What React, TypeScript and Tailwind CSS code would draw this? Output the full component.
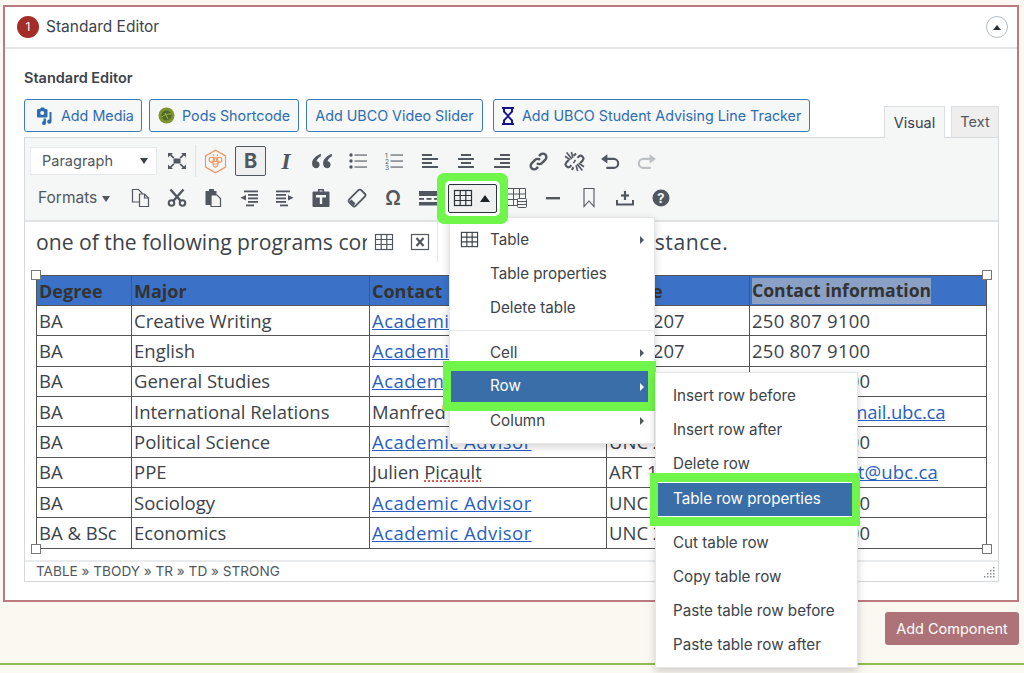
import type { ReactNode } from 'react';

const ink = '#50575e';

const Svg = ({ children, size = 20 }: { children: ReactNode; size?: number }) => (
  <svg width={size} height={size} viewBox="0 0 20 20" fill={ink}>
    {children}
  </svg>
);

const TableGlyph = ({ size = 20, color = '#3c434a' }: { size?: number; color?: string }) => (
  <svg width={size} height={size} viewBox="0 0 20 20" fill="none" stroke={color} strokeWidth="1.2">
    <rect x="1.5" y="2.5" width="17" height="15" />
    <path d="M1.5 7.5h17M1.5 12.5h17M7.2 2.5v15M12.8 2.5v15" />
  </svg>
);

const Lines = ({ rows }: { rows: [number, number, number][] }) => (
  <Svg>
    {rows.map(([x, y, w], i) => (
      <rect key={i} x={x} y={y} width={w} height="2" />
    ))}
  </Svg>
);

const icons: Record<string, ReactNode> = {
  fullscreen: (
    <Svg>
      <rect x="6.5" y="7.5" width="7" height="5" />
      <path d="M1 2h5L4.4 3.6 7.5 6.5 6 7.5 3 4.6 1 6.5zM19 2h-5l1.6 1.6-3.1 2.9 1.5 1 3-2.9 2 1.9zM1 18h5l-1.6-1.6 3.1-2.9-1.5-1-3 2.9-2-1.9zM19 18h-5l1.6-1.6-3.1-2.9 1.5-1 3 2.9 2-1.9z" />
    </Svg>
  ),
  bee: (
    <svg width="23" height="25" viewBox="0 0 23 25" fill="none" stroke="#f0935a" strokeWidth="1.1">
      <path d="M11.5 1.2 21.5 6.9v11.2l-10 5.7-10-5.7V6.9z" />
      <circle cx="7.7" cy="10.8" r="2.6" />
      <circle cx="15.3" cy="10.8" r="2.6" />
      <ellipse cx="11.5" cy="13.5" rx="2.6" ry="4.6" />
      <path d="M9.2 12.5h4.6M9.2 15h4.6M10 7l-1-1.6M13 7l1-1.6" />
    </svg>
  ),
  quote: (
    <svg width="22" height="22" viewBox="0 0 20 20" fill={ink}>
      <path d="M9 3.5C4.5 5.2 1 8.2 1 12.5 1 15 2.5 16.5 4.5 16.5c1.9 0 3.3-1.4 3.3-3.2 0-1.8-1.2-3-2.8-3.1.4-1.9 2-3.4 4-4.6zM19 3.5c-4.5 1.7-8 4.7-8 9 0 2.5 1.5 4 3.5 4 1.9 0 3.3-1.4 3.3-3.2 0-1.8-1.2-3-2.8-3.1.4-1.9 2-3.4 4-4.6z" />
    </svg>
  ),
  bullets: (
    <Svg>
      <circle cx="3" cy="4" r="1.7" />
      <circle cx="3" cy="10" r="1.7" />
      <circle cx="3" cy="16" r="1.7" />
      <rect x="6.5" y="3.5" width="12.5" height="1.1" />
      <rect x="6.5" y="9.5" width="12.5" height="1.1" />
      <rect x="6.5" y="15.5" width="12.5" height="1.1" />
    </Svg>
  ),
  numbers: (
    <Svg>
      <text x="1" y="6.5" fontSize="6.5" fontFamily="Inter, sans-serif">1</text>
      <text x="1" y="12.5" fontSize="6.5" fontFamily="Inter, sans-serif">2</text>
      <text x="1" y="18.5" fontSize="6.5" fontFamily="Inter, sans-serif">3</text>
      <rect x="6.5" y="3.5" width="12.5" height="1.1" />
      <rect x="6.5" y="9.5" width="12.5" height="1.1" />
      <rect x="6.5" y="15.5" width="12.5" height="1.1" />
    </Svg>
  ),
  left: <Lines rows={[[2, 3, 10], [2, 7, 16], [2, 11, 10], [2, 15, 16]]} />,
  center: <Lines rows={[[5, 3, 10], [2, 7, 16], [5, 11, 10], [2, 15, 16]]} />,
  right: <Lines rows={[[8, 3, 10], [2, 7, 16], [8, 11, 10], [2, 15, 16]]} />,
  link: (
    <svg width="21" height="21" viewBox="0 0 20 20" fill="none" stroke={ink} strokeWidth="2.3">
      <path d="M8.5 11.5a3.3 3.3 0 0 0 4.7 0l3.3-3.3a3.3 3.3 0 0 0-4.7-4.7L10.5 4.8" />
      <path d="M11.5 8.5a3.3 3.3 0 0 0-4.7 0l-3.3 3.3a3.3 3.3 0 0 0 4.7 4.7l1.3-1.3" />
    </svg>
  ),
  unlink: (
    <svg width="21" height="21" viewBox="0 0 20 20" fill="none" stroke={ink} strokeWidth="2">
      <path d="M13 6.5l1-1.3a2.7 2.7 0 0 1 3.8 3.8L15.5 11.5" />
      <path d="M7 13.5l-1 1.3a2.7 2.7 0 0 1-3.8-3.8l2.3-2.5" />
      <path strokeWidth="1.5" d="M2.5 1.5l5 6M1 5l5 3.5M7 1l1.5 5.5M17.5 18.5l-5-6M19 15l-5-3.5M13 19l-1.5-5.5M11 8.5l-2 3" />
      <path d="M9 4.5l2.5-2M9 15.5l-1.5 2.5" />
    </svg>
  ),
  undo: (
    <svg width="21" height="21" viewBox="0 0 20 20" fill="none" stroke={ink} strokeWidth="2">
      <path d="M5.5 7.5h7.5a4.3 4.3 0 0 1 0 8.6H6" />
      <path fill={ink} stroke="none" d="M1 7.5 7 3v9z" />
    </svg>
  ),
  redo: (
    <svg width="21" height="21" viewBox="0 0 20 20" fill="none" stroke="#bcc0c4" strokeWidth="2">
      <path d="M14.5 7.5H7a4.3 4.3 0 0 0 0 8.6h7" />
      <path fill="#bcc0c4" stroke="none" d="M19 7.5 13 3v9z" />
    </svg>
  ),
  copy: (
    <svg width="20" height="20" viewBox="0 0 20 20" fill="#f5f6f6" stroke={ink} strokeWidth="1.2">
      <path d="M1.5 1.5h6l3.5 3.5v9h-9.5z" />
      <path d="M8.5 6h5l4 4v8.5h-9z" />
      <path d="M13.5 6v4h4" fill="none" />
    </svg>
  ),
  cut: (
    <svg width="20" height="20" viewBox="0 0 20 20" fill="none" stroke={ink} strokeWidth="2">
      <circle cx="4.5" cy="15" r="2.8" />
      <circle cx="15.5" cy="15" r="2.8" />
      <path strokeWidth="2.4" d="M6.5 12.7 16.5 1.5M13.5 12.7 3.5 1.5" />
    </svg>
  ),
  paste: (
    <Svg>
      <path d="M6 1h5v2h2.5v4H9v10H2.5V3H6z" />
      <path fill="#f5f6f6" stroke={ink} strokeWidth="1.2" d="M8 7h6l3.5 3.5v8H8z" />
    </Svg>
  ),
  outdent: (
    <Svg>
      <rect x="5" y="2.5" width="14" height="1.8" />
      <rect x="9" y="6" width="10" height="1.8" />
      <rect x="9" y="9.5" width="10" height="1.8" />
      <rect x="9" y="13" width="10" height="1.8" />
      <rect x="7" y="16.5" width="8" height="1.8" />
      <path d="M7 7v5.5L1.5 9.7z" />
    </Svg>
  ),
  indent: (
    <Svg>
      <rect x="1" y="2.5" width="14" height="1.8" />
      <rect x="1" y="6" width="10" height="1.8" />
      <rect x="1" y="9.5" width="10" height="1.8" />
      <rect x="1" y="13" width="10" height="1.8" />
      <rect x="5" y="16.5" width="8" height="1.8" />
      <path d="M13 7v5.5l5.5-2.8z" />
    </Svg>
  ),
  pasteText: (
    <Svg>
      <path fillRule="evenodd" d="M7 1h6v2.500h4.500q1 0 1 1V18q0 1-1 1h-15q-1 0-1-1V4.500q0-1 1-1H7zM8.500 2.500v1h3v-1zM5 7v2.500h3.800V16h2.400V9.500H15V7z" />
    </Svg>
  ),
  eraser: (
    <svg width="20" height="20" viewBox="0 0 20 20" fill="none" stroke={ink} strokeWidth="1.8">
      <rect x="5.5" y="1.5" width="9" height="17" rx="2" transform="rotate(45 10 10)" />
      <path strokeWidth="2.6" d="M3.5 12.5 7.5 16.5" />
    </svg>
  ),
  hr: (
    <Svg>
      <rect x="0" y="3" width="20" height="5" />
      <rect x="0" y="10" width="5" height="1.8" />
      <rect x="7.5" y="10" width="5" height="1.8" />
      <rect x="15" y="10" width="5" height="1.8" />
      <rect x="0" y="14" width="20" height="3.5" />
    </Svg>
  ),
  split: (
    <svg width="20" height="20" viewBox="0 0 20 20" fill="#f5f6f6" stroke={ink} strokeWidth="1">
      <path fill="none" d="M0.5 0.5h18v17h-18zM0.5 6h18M0.5 11.5h18M6.5 0.5v17M12.5 0.5v17" />
      <rect x="10.5" y="10.5" width="9" height="9" rx="1" />
      <path fill="none" d="M10.5 13.5h9M10.5 16.5h9" />
    </svg>
  ),
  dash: (
    <Svg>
      <rect x="3" y="9" width="14" height="2.4" />
    </Svg>
  ),
  bookmark: (
    <svg width="20" height="20" viewBox="0 0 20 20" fill="none" stroke={ink} strokeWidth="1.1">
      <path d="M5 0.5h10v18l-5-5.5-5 5.5z" />
    </svg>
  ),
  insert: (
    <Svg>
      <rect x="8.9" y="3" width="2.2" height="9" />
      <rect x="6" y="6.4" width="8" height="2.2" />
      <path d="M1 12h2v3.5h14V12h2v5.5H1z" />
    </Svg>
  ),
  help: (
    <svg width="20" height="20" viewBox="0 0 20 20">
      <circle cx="10" cy="10" r="8.5" fill={ink} />
      <text x="10" y="14.5" textAnchor="middle" fontSize="13" fontWeight="700" fill="#f5f6f6" fontFamily="Inter, sans-serif">?</text>
    </svg>
  ),
};

const Cell = ({ children }: { children: ReactNode }) => (
  <div className="w-9 h-7 flex items-center justify-center shrink-0">{children}</div>
);

const Handle = ({ className }: { className: string }) => (
  <div className={`absolute w-[10px] h-[10px] bg-white border border-[#777] z-[5] ${className}`} />
);

const rows = [
  ['BA', 'Creative Writing', 'link', 'UNC 207', '250 807 9100'],
  ['BA', 'English', 'link', 'UNC 207', '250 807 9100'],
  ['BA', 'General Studies', 'link', 'UNC 207', '250 807 9100'],
  ['BA', 'International Relations', 'Manfred Jaeger', 'ART 120', 'manfred.j@mail.ubc.ca'],
  ['BA', 'Political Science', 'link', 'UNC 207', '250 807 9100'],
  ['BA', 'PPE', 'Julien Picault', 'ART 124', 'julien.picault@ubc.ca'],
  ['BA', 'Sociology', 'link', 'UNC 207', '250 807 9100'],
  ['BA & BSc', 'Economics', 'link', 'UNC 207', '250 807 9100'],
];

const MenuItem = ({ label, arrow, icon }: { label: string; arrow?: boolean; icon?: boolean }) => (
  <div className="h-[34px] flex items-center pl-[40px] pr-[10px] relative text-[#3c434a]">
    {icon && (
      <span className="absolute left-[10px] top-[7px]">
        <TableGlyph size={19} />
      </span>
    )}
    <span className="flex-1">{label}</span>
    {arrow && <span className="w-0 h-0 border-y-[4px] border-y-transparent border-l-[4px] border-l-[#50575e]" />}
  </div>
);

const SubItem = ({ label }: { label: string }) => (
  <div className="h-[34.2px] flex items-center pl-[17px] text-[#3c434a]">{label}</div>
);

export default function App() {
  return (
    <div className="relative w-[1024px] h-[673px] overflow-hidden bg-[#fbf8f1] font-['Inter',sans-serif] text-[#3c434a]">
      <div className="pt-[5px] pl-[3px] pr-[5px]">
        <div className="h-[597px] border-2 border-[#ba7a80] bg-white">
          <div className="h-[42px] border-b-2 border-[#e4e6e8] flex items-center pl-3 pr-[9px]">
            <span className="w-[22px] h-[22px] rounded-full bg-[#a42d28] text-white text-[12px] flex items-center justify-center">1</span>
            <span className="ml-[7px] text-[15.5px] flex-1">Standard Editor</span>
            <span className="w-[22px] h-[22px] rounded-full border border-[#b5bcc5] flex items-center justify-center">
              <span className="w-0 h-0 border-x-[4px] border-x-transparent border-b-[5px] border-b-[#2c3338]" />
            </span>
          </div>

          <div className="pl-[19px] pr-[18px]">
            <div className="pt-[19px] h-[50px] text-[14.5px] font-semibold leading-[20px]">Standard Editor</div>

            <div className="flex items-end h-[38px]">
              <div className="flex gap-[7px] text-[14.3px] text-[#2e6cb0] self-start">
                <button className="h-[33px] w-[118px] border border-[#3f7ab5] rounded-[3px] bg-[#f6f7f7] flex items-center pl-[9px] gap-[7px]">
                  <svg width="20" height="20" viewBox="0 0 20 20" fill="#2e6cb0">
                    <path fillRule="evenodd" d="M4 3h2l1-1.5h3L11 3h1.5q1 0 1 1v6.5q0 1-1 1H4q-1 0-1-1V4q0-1 1-1zM8.2 5a2 2 0 1 0 0 4 2 2 0 0 0 0-4z" />
                    <path d="M15 6h2.5v9.5a2.2 2.2 0 1 1-2-2.1V6zM9.5 12.5H12V17a2 2 0 1 1-2.5-1.9z" />
                  </svg>
                  Add Media
                </button>
                <button className="h-[33px] w-[150px] border border-[#3f7ab5] rounded-[3px] bg-[#f6f7f7] flex items-center pl-[8px] gap-[7px]">
                  <svg width="17" height="17" viewBox="0 0 17 17">
                    <circle cx="8.5" cy="8.5" r="8" fill="#7d9431" />
                    <circle cx="8.5" cy="8.5" r="5" fill="#4f6b22" />
                    <path d="M4 10c3-3 6-3 9-3M7 6l3 6" stroke="#a4b95c" fill="none" />
                  </svg>
                  Pods Shortcode
                </button>
                <button className="h-[33px] w-[177px] border border-[#3f7ab5] rounded-[3px] bg-[#f6f7f7] flex items-center justify-center">
                  Add UBCO Video Slider
                </button>
                <button className="ml-[3px] h-[33px] w-[317px] border border-[#3f7ab5] rounded-[3px] bg-[#f6f7f7] flex items-center pl-[7px] gap-[7px]">
                  <svg width="14" height="18" viewBox="0 0 14 18" fill="#14128c">
                    <path d="M1 0h12v2h-1v3L8 9l4 4v3h1v2H1v-2h1v-3l4-4-4-4V2H1zM4 2v2.3L7 7.5l3-3.2V2zM7 10.5 4 13.7V16h6v-2.300z" />
                  </svg>
                  Add UBCO Student Advising Line Tracker
                </button>
              </div>
              <div className="ml-auto flex items-end text-[14.5px] gap-[6px]">
                <div className="h-[32px] w-[61px] border border-[#dcdfe2] border-b-0 bg-[#f5f6f6] flex items-center justify-center relative top-px">Visual</div>
                <div className="h-[31px] w-[48px] border border-[#dcdfe2] border-b-0 bg-[#eeeeee] flex items-center justify-center text-[#50575e]">Text</div>
              </div>
            </div>

            <div className="border border-[#d6d9dc]">
              <div className="h-[84px] bg-[#f5f6f6] border-b-2 border-[#dfe1e3] pl-[5px] pt-[8px]">
                <div className="flex items-center h-[30px]">
                  <div className="w-[127px] h-[28px] bg-white border border-[#e6e8ea] flex items-center pl-[11px] pr-[8px] text-[14.5px] text-[#50575e] shrink-0">
                    <span className="flex-1">Paragraph</span>
                    <span className="w-0 h-0 border-x-[4.5px] border-x-transparent border-t-[6px] border-t-[#3c434a]" />
                  </div>
                  <div className="ml-[2px]"><Cell>{icons.fullscreen}</Cell></div>
                  <div className="w-px h-[32px] bg-[#e0e2e4] mr-[1px]" />
                  <Cell>{icons.bee}</Cell>
                  <div className="w-[31px] h-[30px] mx-[2px] border border-[#50575e] rounded-[2px] bg-[#f0f0f1] flex items-center justify-center text-[20px] font-bold text-[#50575e] shrink-0">B</div>
                  <Cell><span className="font-['Liberation_Serif',serif] italic font-bold text-[24px] text-[#50575e]">I</span></Cell>
                  <Cell>{icons.quote}</Cell>
                  <Cell>{icons.bullets}</Cell>
                  <Cell>{icons.numbers}</Cell>
                  <Cell>{icons.left}</Cell>
                  <Cell>{icons.center}</Cell>
                  <Cell>{icons.right}</Cell>
                  <Cell>{icons.link}</Cell>
                  <Cell>{icons.unlink}</Cell>
                  <Cell>{icons.undo}</Cell>
                  <Cell>{icons.redo}</Cell>
                </div>
                <div className="flex items-center h-[30px] mt-[7px]">
                  <div className="w-[93px] pl-[8px] flex items-center gap-[5px] text-[15.5px] text-[#50575e] shrink-0">
                    Formats
                    <span className="w-0 h-0 border-x-[4px] border-x-transparent border-t-[6px] border-t-[#50575e] mt-[2px]" />
                  </div>
                  <Cell>{icons.copy}</Cell>
                  <Cell>{icons.cut}</Cell>
                  <Cell>{icons.paste}</Cell>
                  <Cell>{icons.outdent}</Cell>
                  <Cell>{icons.indent}</Cell>
                  <Cell>{icons.pasteText}</Cell>
                  <Cell>{icons.eraser}</Cell>
                  <Cell><span className="text-[20px] font-semibold text-[#50575e]">Ω</span></Cell>
                  <Cell>{icons.hr}</Cell>
                  <div className="relative z-30 w-[49px] h-[29px] ml-[1px] shrink-0 bg-[#f0f0f1] border border-[#2c3338] rounded-[2px] shadow-[0_0_0_3px_#fff,0_0_0_11px_#70f54a] flex items-center pl-[4px] gap-[7px]">
                    <TableGlyph size={20} color="#2c3338" />
                    <span className="w-0 h-0 border-x-[5px] border-x-transparent border-b-[7px] border-b-[#1d2327]" />
                  </div>
                  <div className="ml-[2px]"><Cell>{icons.split}</Cell></div>
                  <Cell>{icons.dash}</Cell>
                  <Cell>{icons.bookmark}</Cell>
                  <Cell>{icons.insert}</Cell>
                  <Cell>{icons.help}</Cell>
                </div>
              </div>

              <div className="relative h-[338px] pl-[11px] pr-[11px] font-['Open_Sans',sans-serif]">
                <p className="h-[53px] pt-[5px] text-[21.15px] leading-[30px] whitespace-nowrap">
                  one of the following programs correspond with contact for assi<span className="tracking-[0.55px]">stance.</span>
                </p>

                <table className="table-fixed w-[950px] border-collapse text-[18.5px] leading-[24px]">
                  <colgroup>
                    <col className="w-[95px]" />
                    <col className="w-[238px]" />
                    <col className="w-[237px]" />
                    <col className="w-[143px]" />
                    <col className="w-[237px]" />
                  </colgroup>
                  <thead>
                    <tr className="h-[30px] bg-[#3b72c8] font-bold text-[18px] text-[#333]">
                      <td className="border border-[#555] px-[2px]">Degree</td>
                      <td className="border border-[#555] px-[2px]">Major</td>
                      <td className="border border-[#555] px-[2px]">Contact</td>
                      <td className="border border-[#555] px-[2px]">Office</td>
                      <td className="border border-[#555] px-[2px]"><span className="inline-block bg-[#8aa0c4] h-[26px] text-[17.6px]">Contact information</span></td>
                    </tr>
                  </thead>
                  <tbody>
                    {rows.map((r, i) => (
                      <tr key={i} className="h-[30.35px]">
                        <td className="border border-[#555] px-[2px] whitespace-nowrap">{r[0]}</td>
                        <td className="border border-[#555] px-[2px]">{r[1]}</td>
                        <td className="border border-[#555] px-[2px] whitespace-nowrap">
                          {r[2] === 'link' ? (
                            <a className="text-[#2a5fc0] underline tracking-[0.45px]">Academic Advisor</a>
                          ) : r[2] === 'Julien Picault' ? (
                            <>Julien <span className="underline decoration-dotted decoration-[#e8584f]">Picault</span></>
                          ) : r[2]}
                        </td>
                        <td className="border border-[#555] px-[2px] whitespace-nowrap">{r[3]}</td>
                        <td className="border border-[#555] px-[2px] whitespace-nowrap">
                          {r[4].includes('@') ? (
                            <a className={`text-[#2a5fc0] underline ${r[4].includes('mail') ? 'tracking-[-0.2px]' : 'tracking-[0.2px]'}`}>{r[4]}</a>
                          ) : (
                            <span className="tracking-[0.25px]">{r[4]}</span>
                          )}
                        </td>
                      </tr>
                    ))}
                  </tbody>
                </table>

                <Handle className="left-[6px] top-[48px]" />
                <Handle className="left-[957px] top-[48px]" />
                <Handle className="left-[6px] top-[322px]" />
                <Handle className="left-[957px] top-[322px]" />

                <div className="absolute left-[342px] top-0 w-[84px] h-[40px] bg-white flex items-center pl-[7px] gap-[16px] z-10">
                  <TableGlyph size={20} color="#50575e" />
                  <svg width="20" height="20" viewBox="0 0 20 20" fill="none" stroke="#50575e">
                    <rect x="1.5" y="2.5" width="17" height="15" strokeWidth="1.2" />
                    <path d="M6.5 6l7 8M13.5 6l-7 8" strokeWidth="2.2" />
                  </svg>
                  <span className="w-px h-[40px] bg-[#e4e6e8] -ml-[9px]" />
                </div>
              </div>

              <div className="h-[21px] border-t-2 border-[#e8eaec] pl-[11px] flex items-center justify-between text-[13.6px] text-[#50575e]">
                <span>TABLE » TBODY » TR » TD » STRONG</span>
                <svg width="12" height="12" viewBox="0 0 12 12" fill="#8c8f94" className="mr-[2px]">
                  <rect x="9" y="1" width="1.5" height="1.5" />
                  <rect x="6" y="4" width="1.5" height="1.5" />
                  <rect x="9" y="4" width="1.5" height="1.5" />
                  <rect x="3" y="7" width="1.5" height="1.5" />
                  <rect x="6" y="7" width="1.5" height="1.5" />
                  <rect x="9" y="7" width="1.5" height="1.5" />
                  <rect x="0" y="10" width="1.5" height="1.5" />
                  <rect x="3" y="10" width="1.5" height="1.5" />
                  <rect x="6" y="10" width="1.5" height="1.5" />
                  <rect x="9" y="10" width="1.5" height="1.5" />
                </svg>
              </div>
            </div>
          </div>
        </div>

        <div className="flex justify-end mt-[10px]">
          <button className="w-[134px] h-[33px] rounded-[3px] bg-[#ae7378] text-white text-[14.5px]">Add Component</button>
        </div>
        <div className="mt-[18px] -ml-[3px] -mr-[5px] h-[2px] bg-[#8fbc4f]" />
      </div>

      {/* table dropdown */}
      <div className="absolute left-[449px] top-[217px] w-[206px] h-[227px] z-20 bg-white border border-[#e4e6e8] shadow-[0_3px_8px_rgba(0,0,0,0.18)] text-[15.2px] pt-[5px]">
        <MenuItem label="Table" arrow icon />
        <MenuItem label="Table properties" />
        <MenuItem label="Delete table" />
        <div className="h-px bg-[#e4e6e8] my-[5px]" />
        <MenuItem label="Cell" arrow />
        <div className="relative h-[34px]">
          <div className="absolute -left-[7px] -right-[2px] -top-[9px] -bottom-[7px] bg-[#70f54a]" />
          <div className="absolute left-[1px] right-[6px] top-[1px] h-[31px] pl-[39px] pr-[4px] flex items-center justify-between bg-[#3a6ea8] text-white">
            Row
            <span className="w-0 h-0 border-y-[4px] border-y-transparent border-l-[4px] border-l-white" />
          </div>
        </div>
        <MenuItem label="Column" arrow />
      </div>

      <div className="absolute left-[655px] top-[372px] w-[203px] h-[296px] z-20 bg-white border border-[#e4e6e8] shadow-[0_3px_8px_rgba(0,0,0,0.18)] text-[15.2px] pt-[6px]">
        <SubItem label="Insert row before" />
        <SubItem label="Insert row after" />
        <SubItem label="Delete row" />
        <div className="relative">
          <div className="absolute -left-[6px] -right-[3px] -top-[9px] -bottom-[9px] bg-[#70f54a]" />
          <div className="relative ml-[2px] h-[35px] w-[194px] pl-[15px] flex items-center bg-[#3a6ea8] border-y border-white text-white">Table row properties</div>
        </div>
        <div className="h-[9.5px]" />
        <SubItem label="Cut table row" />
        <SubItem label="Copy table row" />
        <SubItem label="Paste table row before" />
        <SubItem label="Paste table row after" />
      </div>
    </div>
  );
}
